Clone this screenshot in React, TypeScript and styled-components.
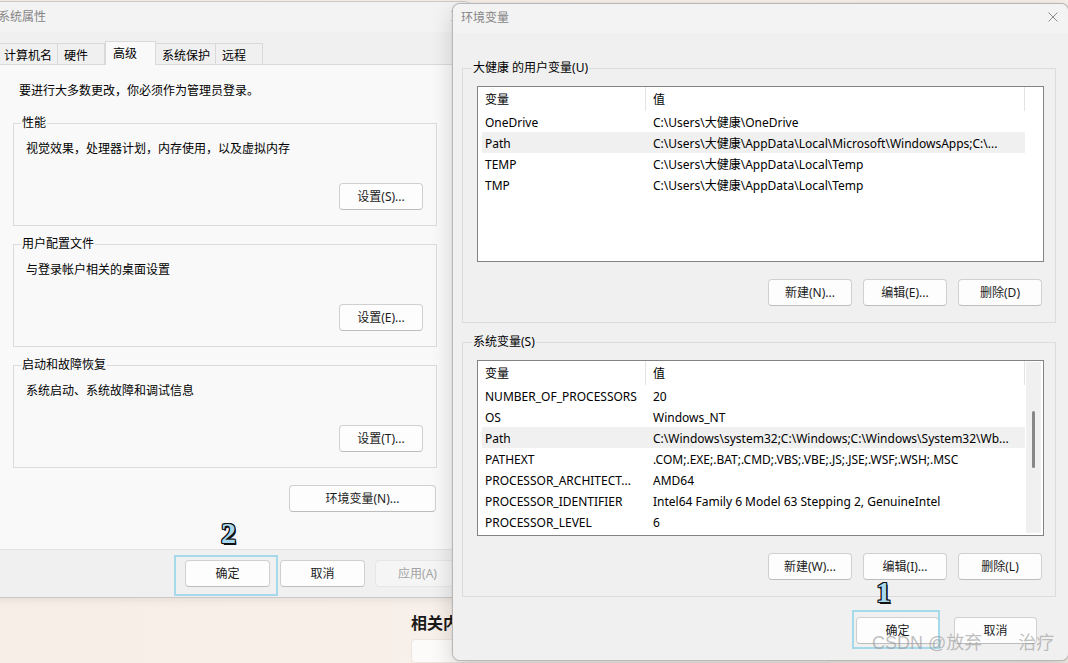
import React from "react";
import styled, { createGlobalStyle } from "styled-components";

const FONT = `"Segoe UI", "Noto Sans", "Noto Sans CJK SC", sans-serif`;
const CJK = `"Noto Sans CJK SC", "Noto Sans", sans-serif`;

const GlobalStyle = createGlobalStyle`
  * { box-sizing: border-box; }
  html, body { margin: 0; padding: 0; }
  body {
    width: 1068px;
    height: 663px;
    overflow: hidden;
    background: #f5ede7;
    font-family: ${FONT};
    font-size: 12px;
    line-height: 16px;
    color: #000;
  }
`;

const Desktop = styled.div`
  position: relative;
  width: 1068px;
  height: 663px;
  overflow: hidden;
  background: linear-gradient(90deg, #f7eee7 0%, #f8f0ea 60%, #f6efea 100%);
`;

/* ---------- settings app lying behind the dialogs ---------- */
const SettingsApp = styled.div`
  position: absolute;
  inset: 0;
  display: flex;
  flex-direction: column;
  gap: 6px;
  padding: 611px 0 0 411px;
`;
const SettingsHeading = styled.h2`
  margin: 0;
  font-family: ${CJK};
  font-size: 16px;
  line-height: 22px;
  font-weight: 600;
  color: #1a1a1a;
  white-space: nowrap;
`;
const SettingsCard = styled.div`
  width: 420px;
  height: 60px;
  background: #fcfbfa;
  border: 1px solid #ebe5e0;
  border-radius: 4px;
`;

/* ---------- generic window chrome ---------- */
const Window = styled.section<{
  $left: number;
  $top: number;
  $width: number;
  $height: number;
  $active?: boolean;
}>`
  position: absolute;
  left: ${(p) => p.$left}px;
  top: ${(p) => p.$top}px;
  width: ${(p) => p.$width}px;
  height: ${(p) => p.$height}px;
  display: flex;
  flex-direction: column;
  overflow: hidden;
  background: #f0f0f0;
  border: 1px solid ${(p) => (p.$active ? "#b8b8b8" : "#c9c9c9")};
  border-radius: 8px;
  box-shadow: ${(p) =>
    p.$active
      ? "0 0 1px rgba(0,0,0,0.25), 0 8px 22px rgba(0,0,0,0.16)"
      : "0 2px 8px rgba(0,0,0,0.08)"};
`;

const TitleBar = styled.header<{ $height: number; $padLeft: number }>`
  flex: none;
  height: ${(p) => p.$height}px;
  display: flex;
  align-items: center;
  padding: 0 10px 3px ${(p) => p.$padLeft}px;
  background: #f3f3f3;
`;
const Title = styled.span`
  font-family: ${CJK};
  font-size: 12px;
  color: #858585;
  white-space: nowrap;
`;
const CloseButton = styled.span`
  margin-left: auto;
  width: 10px;
  height: 10px;
  display: flex;
`;

const CloseIcon = () => (
  <svg width="10" height="10" viewBox="0 0 10 10">
    <path d="M0.5 0.5L9.5 9.5M9.5 0.5L0.5 9.5" stroke="#8c8c8c" strokeWidth="1" fill="none" />
  </svg>
);

const Button = styled.button<{ $width?: number; $disabled?: boolean }>`
  flex: none;
  width: ${(p) => p.$width ?? 84}px;
  height: 27px;
  padding: 0;
  border: 1px solid ${(p) => (p.$disabled ? "#e6e6e6" : "#d0d0d0")};
  border-bottom-color: ${(p) => (p.$disabled ? "#e6e6e6" : "#bdbdbd")};
  border-radius: 4px;
  background: ${(p) => (p.$disabled ? "#f5f5f5" : "#fdfdfd")};
  color: ${(p) => (p.$disabled ? "#a3a3a3" : "#1b1b1b")};
  font-family: ${FONT};
  font-size: 12px;
  line-height: 16px;
  white-space: nowrap;
`;

const GroupBox = styled.fieldset<{ $gap?: number }>`
  margin: ${(p) => p.$gap ?? 0}px 0 0 0;
  padding: 0;
  min-width: 0;
  border: 1px solid #dcdcdc;
`;
const GroupLegend = styled.legend<{ $inset: number }>`
  margin-left: ${(p) => p.$inset}px;
  padding: 0 1px;
  font-family: ${FONT};
  font-size: 12px;
  line-height: 16px;
  color: #000;
  white-space: nowrap;
`;

/* ---------- 系统属性 ---------- */
const TabStrip = styled.nav`
  flex: none;
  height: 33px;
  display: flex;
  align-items: flex-end;
  padding-left: 7px;
  background: #f0f0f0;
  border-bottom: 1px solid #dadada;
`;
const Tab = styled.div<{ $selected?: boolean }>`
  position: relative;
  z-index: ${(p) => (p.$selected ? 1 : 0)};
  height: ${(p) => (p.$selected ? 24 : 21)}px;
  min-width: ${(p) => (p.$selected ? 51 : 47)}px;
  margin-bottom: ${(p) => (p.$selected ? -1 : 0)}px;
  padding: ${(p) => (p.$selected ? "3px 6px 0 7px" : "3px 5px 0 6px")};
  border: 1px solid #d9d9d9;
  border-bottom: none;
  border-left-width: ${(p) => (p.$selected ? 1 : 0)}px;
  background: ${(p) => (p.$selected ? "#f9f9f9" : "#f0f0f0")};
  font-family: ${CJK};
  font-size: 12px;
  line-height: 16px;
  color: #000;
  white-space: nowrap;
`;
const SysContent = styled.div`
  flex: none;
  height: 484px;
  padding: 17px 0 0 22px;
  background: #f9f9f9;
`;
const SysColumn = styled.div`
  width: 424px;
  display: flex;
  flex-direction: column;
`;
const Intro = styled.p`
  margin: 0 0 17px 6px;
  font-family: ${CJK};
  line-height: 16px;
`;
const SysGroupBody = styled.div`
  display: flex;
  flex-direction: column;
  padding: 9px 13px 15px 12px;
`;
const GroupDesc = styled.p`
  margin: 0 0 27px 0;
  font-family: ${CJK};
  line-height: 16px;
`;
const RightAligned = styled.div<{ $gap?: number; $inset?: number }>`
  display: flex;
  justify-content: flex-end;
  margin-top: ${(p) => p.$gap ?? 0}px;
  padding-right: ${(p) => p.$inset ?? 0}px;
`;
const DialogFooter = styled.footer<{ $gap: number; $padTop: number; $padRight: number; $border?: boolean }>`
  flex: 1;
  display: flex;
  justify-content: flex-end;
  gap: ${(p) => p.$gap}px;
  padding: ${(p) => p.$padTop}px ${(p) => p.$padRight}px 0 0;
  border-top: ${(p) => (p.$border ? "1px solid #e2e2e2" : "none")};
  background: #f0f0f0;
`;

/* ---------- 环境变量 ---------- */
const EnvBody = styled.div`
  flex: none;
  display: flex;
  flex-direction: column;
  padding: 27px 12px 0 9px;
`;
const EnvGroupBody = styled.div`
  display: flex;
  flex-direction: column;
  padding: 10px 11px 16px 14px;
`;
const ListView = styled.div`
  height: 176px;
  display: flex;
  border: 1px solid #838383;
  background: #ffffff;
`;
const ListTable = styled.div`
  flex: 1;
  min-width: 0;
  display: flex;
  flex-direction: column;
  padding-left: 4px;
  overflow: hidden;
`;
const ListHeader = styled.div`
  flex: none;
  height: 24px;
  display: grid;
  grid-template-columns: 164px 1fr;
  border-right: 1px solid #e3e3e3;
`;
const HeaderCell = styled.div<{ $first?: boolean }>`
  display: flex;
  align-items: center;
  padding-left: ${(p) => (p.$first ? 3 : 7)}px;
  border-right: ${(p) => (p.$first ? "1px solid #e3e3e3" : "none")};
  font-family: ${CJK};
  font-size: 12px;
`;
const ListRow = styled.div<{ $selected?: boolean }>`
  flex: none;
  height: 21px;
  display: grid;
  grid-template-columns: 164px 1fr;
  background: ${(p) => (p.$selected ? "#f0f0f0" : "transparent")};
`;
const Cell = styled.div<{ $first?: boolean }>`
  padding: 2px 0 0 ${(p) => (p.$first ? 3 : 7)}px;
  line-height: 19px;
  white-space: nowrap;
  overflow: hidden;
`;
const ScrollArea = styled.div`
  flex: none;
  width: 18px;
  display: flex;
  flex-direction: column;
`;
const ScrollTrack = styled.div<{ $offset: number }>`
  flex: 1;
  margin: 1px 2px 2px 1px;
  display: flex;
  flex-direction: column;
  align-items: center;
  padding-top: ${(p) => p.$offset}px;
  background: #f0f0f0;
`;
const ScrollThumb = styled.div<{ $length: number }>`
  width: 3px;
  height: ${(p) => p.$length}px;
  border-radius: 2px;
  background: #878787;
`;

/* ---------- annotations on top ---------- */
const Highlight = styled.div<{ $left: number; $top: number; $width: number; $height: number }>`
  position: absolute;
  left: ${(p) => p.$left}px;
  top: ${(p) => p.$top}px;
  width: ${(p) => p.$width}px;
  height: ${(p) => p.$height}px;
  border: 2px solid #a6d9e9;
  pointer-events: none;
`;
const StepNumber = styled.div<{ $left: number; $top: number }>`
  position: absolute;
  left: ${(p) => p.$left}px;
  top: ${(p) => p.$top}px;
  font-family: "Liberation Serif", "DejaVu Serif", serif;
  font-weight: 700;
  font-size: 30px;
  line-height: 1;
  color: #a9d9ee;
  text-shadow:
    -1px -1px 0 #111, 1px -1px 0 #111, -1px 1px 0 #111, 1px 1px 0 #111,
    0 -1px 0 #111, 0 1px 0 #111, -1px 0 0 #111, 1px 0 0 #111,
    1.5px 1.5px 0 #111;
`;
const Watermark = styled.div`
  position: absolute;
  left: 872px;
  top: 631px;
  font-family: "Liberation Sans", "Noto Sans CJK SC", sans-serif;
  font-size: 18px;
  line-height: 24px;
  color: rgba(150, 150, 150, 0.6);
  white-space: pre;
  pointer-events: none;
`;

type Row = { name: string; value: string; selected?: boolean };

const userVars: Row[] = [
  { name: "OneDrive", value: "C:\\Users\\大健康\\OneDrive" },
  { name: "Path", value: "C:\\Users\\大健康\\AppData\\Local\\Microsoft\\WindowsApps;C:\\...", selected: true },
  { name: "TEMP", value: "C:\\Users\\大健康\\AppData\\Local\\Temp" },
  { name: "TMP", value: "C:\\Users\\大健康\\AppData\\Local\\Temp" },
];

const systemVars: Row[] = [
  { name: "NUMBER_OF_PROCESSORS", value: "20" },
  { name: "OS", value: "Windows_NT" },
  { name: "Path", value: "C:\\Windows\\system32;C:\\Windows;C:\\Windows\\System32\\Wb...", selected: true },
  { name: "PATHEXT", value: ".COM;.EXE;.BAT;.CMD;.VBS;.VBE;.JS;.JSE;.WSF;.WSH;.MSC" },
  { name: "PROCESSOR_ARCHITECT...", value: "AMD64" },
  { name: "PROCESSOR_IDENTIFIER", value: "Intel64 Family 6 Model 63 Stepping 2, GenuineIntel" },
  { name: "PROCESSOR_LEVEL", value: "6" },
];

const ButtonRow = styled.div`
  display: flex;
  gap: 11px;
  padding-right: 2px;
`;

const VarList = ({ rows, scroll }: { rows: Row[]; scroll?: boolean }) => (
  <ListView>
    <ListTable>
      <ListHeader>
        <HeaderCell $first>变量</HeaderCell>
        <HeaderCell>值</HeaderCell>
      </ListHeader>
      {rows.map((r) => (
        <ListRow key={r.name} $selected={r.selected}>
          <Cell $first>{r.name}</Cell>
          <Cell>{r.value}</Cell>
        </ListRow>
      ))}
    </ListTable>
    <ScrollArea>
      {scroll && (
        <ScrollTrack $offset={49}>
          <ScrollThumb $length={57} />
        </ScrollTrack>
      )}
    </ScrollArea>
  </ListView>
);

const EnvGroup = ({
  legend,
  rows,
  scroll,
  buttons,
  gap,
}: {
  legend: string;
  rows: Row[];
  scroll?: boolean;
  buttons: string[];
  gap?: number;
}) => (
  <GroupBox $gap={gap}>
    <GroupLegend $inset={9}>{legend}</GroupLegend>
    <EnvGroupBody>
      <VarList rows={rows} scroll={scroll} />
      <RightAligned $gap={17}>
        <ButtonRow>
          {buttons.map((b) => (
            <Button key={b} $width={84}>
              {b}
            </Button>
          ))}
        </ButtonRow>
      </RightAligned>
    </EnvGroupBody>
  </GroupBox>
);

const SysGroup = ({
  legend,
  desc,
  button,
  gap,
}: {
  legend: string;
  desc: string;
  button: string;
  gap?: number;
}) => (
  <GroupBox $gap={gap}>
    <GroupLegend $inset={7}>{legend}</GroupLegend>
    <SysGroupBody>
      <GroupDesc>{desc}</GroupDesc>
      <RightAligned>
        <Button $width={84}>{button}</Button>
      </RightAligned>
    </SysGroupBody>
  </GroupBox>
);

export default function App() {
  return (
    <>
      <GlobalStyle />
      <Desktop>
        <SettingsApp>
          <SettingsHeading>相关内容</SettingsHeading>
          <SettingsCard />
        </SettingsApp>

        <Window $left={-10} $top={1} $width={482} $height={597}>
          <TitleBar $height={30} $padLeft={7}>
            <Title>系统属性</Title>
            <CloseButton>
              <CloseIcon />
            </CloseButton>
          </TitleBar>
          <TabStrip>
            <Tab>计算机名</Tab>
            <Tab>硬件</Tab>
            <Tab $selected>高级</Tab>
            <Tab>系统保护</Tab>
            <Tab>远程</Tab>
          </TabStrip>
          <SysContent>
            <SysColumn>
              <Intro>要进行大多数更改，你必须作为管理员登录。</Intro>
              <SysGroup legend="性能" desc="视觉效果，处理器计划，内存使用，以及虚拟内存" button="设置(S)..." />
              <SysGroup gap={10} legend="用户配置文件" desc="与登录帐户相关的桌面设置" button="设置(E)..." />
              <SysGroup gap={10} legend="启动和故障恢复" desc="系统启动、系统故障和调试信息" button="设置(T)..." />
              <RightAligned $gap={17} $inset={1}>
                <Button $width={147}>环境变量(N)...</Button>
              </RightAligned>
            </SysColumn>
          </SysContent>
          <DialogFooter $gap={10} $padTop={10} $padRight={11} $border>
            <Button $width={85}>确定</Button>
            <Button $width={85}>取消</Button>
            <Button $width={85} $disabled>
              应用(A)
            </Button>
          </DialogFooter>
        </Window>

        <Window $left={452} $top={3} $width={617} $height={658} $active>
          <TitleBar $height={29} $padLeft={8}>
            <Title>环境变量</Title>
            <CloseButton>
              <CloseIcon />
            </CloseButton>
          </TitleBar>
          <EnvBody>
            <EnvGroup
              legend="大健康 的用户变量(U)"
              rows={userVars}
              buttons={["新建(N)...", "编辑(E)...", "删除(D)"]}
            />
            <EnvGroup
              gap={11}
              legend="系统变量(S)"
              rows={systemVars}
              scroll
              buttons={["新建(W)...", "编辑(I)...", "删除(L)"]}
            />
          </EnvBody>
          <DialogFooter $gap={15} $padTop={20} $padRight={31}>
            <Button $width={83}>确定</Button>
            <Button $width={83}>取消</Button>
          </DialogFooter>
        </Window>

        <Highlight $left={174} $top={555} $width={104} $height={41} />
        <StepNumber $left={221} $top={518}>2</StepNumber>
        <Highlight $left={852} $top={610} $width={88} $height={39} />
        <StepNumber $left={876} $top={577}>1</StepNumber>
        <Watermark>{"CSDN @放弃\u3000\u3000治疗"}</Watermark>
      </Desktop>
    </>
  );
}
